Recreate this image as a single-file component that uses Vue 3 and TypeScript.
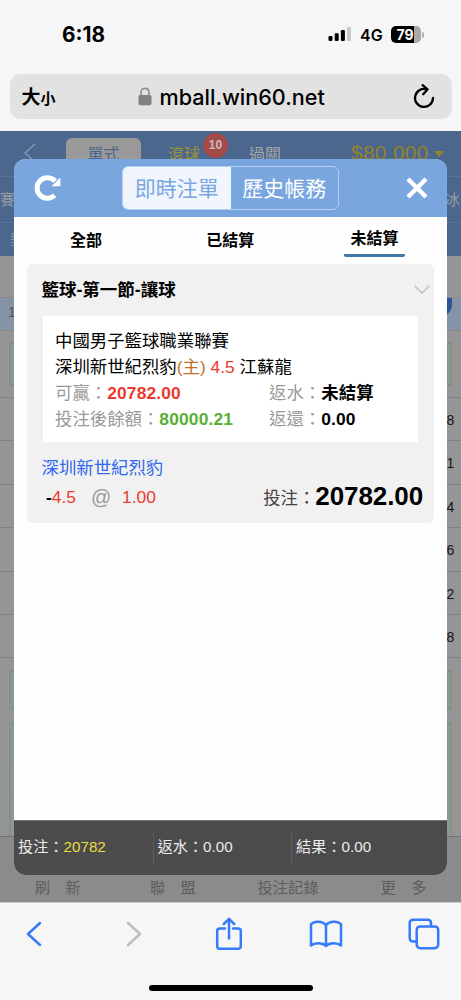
<script setup lang="ts">
const rows: string[] = ['8', '1', '4', '6', '2', '8']
const bottomNav: string[] = ['刷　新', '聯　盟', '投注記錄', '更　多']
const totals = [
  { label: '投注：', value: '20782', hot: true },
  { label: '返水：', value: '0.00', hot: false },
  { label: '結果：', value: '0.00', hot: false },
]
const tabs: string[] = ['全部', '已結算', '未結算']
</script>

<template>
  <div class="phone">
    <header class="status">
      <span class="clock">6:18</span>
      <div class="signals">
        <svg class="bars" width="24" height="16" viewBox="0 0 24 16">
          <rect x="0.5" y="10" width="4" height="5" rx="1.2" />
          <rect x="6.7" y="7.2" width="4" height="7.8" rx="1.2" />
          <rect x="12.9" y="4" width="4" height="11" rx="1.2" />
          <rect x="19" y="0.8" width="4" height="14.2" rx="1.2" fill="#c9c9c9" />
        </svg>
        <span class="net">4G</span>
        <span class="battery">79</span>
        <i class="cap"></i>
      </div>
    </header>

    <div class="address">
      <span class="aa"><b>大</b><small>小</small></span>
      <div class="host">
        <svg width="14" height="19" viewBox="0 0 14 19">
          <rect x="0.5" y="8" width="13" height="10.2" rx="1.8" fill="#808082" />
          <path d="M3 8.5V5.4C3 -0.1 11 -0.1 11 5.4V8.5" fill="none" stroke="#909092" stroke-width="1.7" />
        </svg>
        <span>mball.win60.net</span>
      </div>
      <svg class="reload" width="22" height="26" viewBox="0 0 22 26">
        <path d="M13.6 5.3A9 9 0 1 0 20 14" />
        <path d="M9.6 1.2L14.5 5.4L10.2 10.2" />
      </svg>
    </div>

    <main class="site">
      <div class="page">
        <div class="nav">
          <svg class="back" width="12" height="20" viewBox="0 0 12 20"><path d="M11 1L1 10L11 19" /></svg>
          <span class="mode">單式</span>
          <span class="live">滾球<em>10</em></span>
          <span class="parlay">過關</span>
          <span class="money">$80,000<i></i></span>
        </div>
        <div class="cats"><span>賽</span><span>冰</span></div>
        <div class="subs">對</div>
        <div class="gap"></div>
        <div class="league"><span>1</span><i></i></div>
        <div class="block"><div class="box"></div></div>
        <div v-for="(n, i) in rows" :key="i" class="odds">{{ n }}</div>
        <div class="below">
          <div class="box short"></div>
          <div class="box tall"><i></i><i></i></div>
        </div>
        <nav class="bottom"><span v-for="b in bottomNav" :key="b">{{ b }}</span></nav>
      </div>

      <section class="modal">
        <div class="head">
          <svg class="refresh" width="28" height="28" viewBox="0 0 28 28">
            <path d="M20.6 21.3A10.3 10.3 0 1 1 21.2 7.2" fill="none" stroke="#fff" stroke-width="5" />
            <path d="M26.4 3.6V12.2H17.6Z" fill="#fff" />
          </svg>
          <div class="switch"><span class="on">即時注單</span><span>歷史帳務</span></div>
          <svg class="close" width="22" height="22" viewBox="0 0 22 22"><path d="M2 2L20 20M20 2L2 20" /></svg>
        </div>
        <div class="tabs">
          <span v-for="(t, i) in tabs" :key="t" :class="{ active: i === 2 }">{{ t }}</span>
        </div>
        <article class="card">
          <div class="title">
            <span>籃球-第一節-讓球</span>
            <svg width="16" height="10" viewBox="0 0 16 10"><path d="M1 1.2L8 8L15 1.2" /></svg>
          </div>
          <div class="detail">
            <p>中國男子籃球職業聯賽</p>
            <p>深圳新世紀烈豹<span class="home">(主)</span> <span class="red">4.5</span> 江蘇龍</p>
            <div class="pair">
              <p>可贏：<b class="red">20782.00</b></p>
              <p>返水：<b>未結算</b></p>
              <p>投注後餘額：<b class="green">80000.21</b></p>
              <p>返還：<b>0.00</b></p>
            </div>
          </div>
          <div class="team">深圳新世紀烈豹</div>
          <div class="stake">
            <span class="minus">-</span><span class="red">4.5</span>
            <span class="at">@</span><span class="red">1.00</span>
            <span class="amount">投注：<b>20782.00</b></span>
          </div>
        </article>
        <footer class="totals">
          <div v-for="t in totals" :key="t.label">{{ t.label }}<span :class="{ hot: t.hot }">{{ t.value }}</span></div>
        </footer>
      </section>
    </main>

    <footer class="safari">
      <div class="tools">
        <svg width="16" height="26" viewBox="0 0 16 26"><path d="M14 2L2 13L14 24" /></svg>
        <svg class="off" width="16" height="26" viewBox="0 0 16 26"><path d="M2 2L14 13L2 24" /></svg>
        <svg width="28" height="34" viewBox="0 0 28 34">
          <path d="M10 11.5H4.8Q2.2 11.5 2.2 14V29Q2.2 31.8 4.8 31.8H23.2Q25.8 31.8 25.8 29V14Q25.8 11.5 23.2 11.5H18" />
          <path d="M14 21.5V2.2M8.8 7L14 1.8L19.2 7" />
        </svg>
        <svg width="34" height="28" viewBox="0 0 34 28">
          <path d="M17 5.2C13.5 0.8 5.5 0.6 2 4.2V25.5C5.5 22.5 13.5 22.4 17 26C20.5 22.4 28.5 22.5 32 25.5V4.2C28.5 0.6 20.5 0.8 17 5.2ZM17 5.2V26" />
        </svg>
        <svg width="32" height="32" viewBox="0 0 32 32">
          <path d="M8.6 23.5H5Q1.7 23.5 1.7 20V5Q1.7 1.7 5 1.7H19.7Q23 1.7 23 5V8" />
          <rect x="8.7" y="8.5" width="21.5" height="21.7" rx="3.4" />
        </svg>
      </div>
      <div class="grip"></div>
    </footer>
  </div>
</template>

<style>
body { margin: 0; }
</style>

<style scoped>
* { box-sizing: border-box; }
p { margin: 0; }
svg { display: block; flex: none; }
.phone {
  width: 461px; height: 1000px; overflow: hidden; display: flex; flex-direction: column;
  background: #f6f6f6; color: #000; white-space: nowrap;
  font-family: "Liberation Sans", "Noto Sans CJK TC", sans-serif;
}
.status { height: 74px; flex: none; display: flex; justify-content: space-between; padding: 23px 37px 0 62px; font-family: Inter, sans-serif; }
.clock { font-size: 20.8px; line-height: 24px; font-weight: 700; }
.signals { display: flex; height: 23px; align-items: center; }
.bars { margin-top: -1px; }
.net { margin-left: 8px; width: 31px; font-size: 16px; font-weight: 600; }
.battery { width: 30px; height: 17px; border-radius: 5px; background: linear-gradient(90deg, #000 23px, #a9a9a9 23px); color: #fff; font-size: 14px; line-height: 17px; font-weight: 700; padding-left: 5.5px; }
.cap { width: 2px; height: 6px; margin-left: 1px; background: #b0b0b0; border-radius: 0 2px 2px 0; }
.address { flex: none; height: 45px; margin: 0 9.5px 12px; padding: 0 17px 0 12px; border-radius: 11px; background: #e2e2e2; display: flex; align-items: center; }
.aa { font-family: "Noto Sans CJK TC", sans-serif; display: flex; align-items: baseline; width: 116.5px; line-height: 45px; }
.aa b { font-size: 19px; }
.aa small { font-size: 15px; font-weight: 700; }
.host { display: flex; align-items: center; gap: 7.5px; font-family: Inter, sans-serif; font-size: 21.6px; font-weight: 500; }
.host svg { margin-top: -1px; }
.reload { margin: 0 0 0 auto; fill: none; stroke: #000; stroke-width: 2.3; stroke-linecap: round; stroke-linejoin: round; }

.site { flex: none; height: 771px; position: relative; overflow: hidden; }
.page { height: 771px; background: #959595; display: flex; flex-direction: column; }
.nav { height: 46px; flex: none; display: flex; background: #4c678d; border-bottom: 1px solid #58749a; font-size: 16px; line-height: 47px; color: #a6a6a6; }
.back { margin: 12px 30px 0 24px; fill: none; stroke: #8d9db5; stroke-width: 1.2; }
.mode { margin-top: 7px; width: 75px; height: 39px; line-height: 33px; text-align: center; border-radius: 6px; background: #999; color: #4c678d; }
.live { margin-left: 27px; width: 81px; color: #9e9238; position: relative; }
.live em { position: absolute; left: 35px; top: 2px; width: 25px; height: 25px; border-radius: 50%; background: #a44a49; color: #cbb; font: bold 12px/25px "Liberation Sans", sans-serif; text-align: center; }
.parlay { width: 102px; }
.money { font-size: 20.8px; line-height: 44px; color: #93832d; letter-spacing: .35px; display: flex; align-items: center; height: 43px; }
.money i { border: 5px solid transparent; border-top: 6px solid #93832d; border-bottom: 0; margin: 2px 0 0 5px; }
.cats { height: 46px; flex: none; background: #4c678d; border-bottom: 1px solid #58749a; display: flex; justify-content: space-between; padding-right: 1px; font-size: 15px; line-height: 46px; color: #929baa; }
.subs { height: 33px; flex: none; background: #4c678d; color: #7f90aa; font-size: 15px; line-height: 33px; padding-left: 10px; }
.gap { height: 41px; flex: none; }
.league { height: 34px; flex: none; background: #8493a6; border-bottom: 1px solid #888; border-top: 1px solid #888; display: flex; justify-content: space-between; padding: 0 9px 0 8px; font-size: 14px; line-height: 28px; color: #4e545c; }
.league i { width: 22px; height: 18px; background: #2d5495; border-radius: 0 0 14px 14px; }
.block { height: 67px; flex: none; padding: 11px 9px; border-bottom: 1px solid #828282; }
.box { height: 44px; flex: none; border: 2px solid #809389; background: #8b9592; }
.odds { height: 43.4px; flex: none; border-bottom: 1px solid #828282; text-align: right; padding-right: 6.8px; font-size: 14px; line-height: 44px; color: #151515; }
.below { flex: 1; min-height: 0; padding: 12px 9px 0; display: flex; flex-direction: column; gap: 12px; overflow: hidden; }
.short { height: 40px; }
.tall { height: 130px; background: #919594; }
.tall i { display: block; height: 38px; border-bottom: 1px solid #809389; }
.tall i:first-child { background: #8b9592; }
.bottom { height: 66px; flex: none; border-top: 1px solid #707070; background: #8b8b8b; display: grid; grid-template-columns: repeat(4, 25%); text-align: center; font-size: 15.3px; line-height: 102px; color: #5d5d5d; overflow: hidden; }

.modal { position: absolute; left: 14px; top: 27.5px; width: 432.5px; height: 716.5px; border-radius: 12px; background: #fefefe; overflow: hidden; display: flex; flex-direction: column; }
.head { height: 58.5px; flex: none; background: #79a6df; display: flex; align-items: center; padding: 0 19px 0 20px; }
.switch { width: 217px; height: 43.5px; margin: 0 auto 0 60px; border: 1.3px solid #b8d0ee; border-radius: 6px; display: grid; grid-template-columns: 1fr 1fr; overflow: hidden; font-size: 21px; line-height: 44px; text-align: center; color: #fff; }
.on { background: #f1f5fd; color: #79a6df; }
.refresh { margin-top: 1px; }
.close { fill: none; stroke: #fff; stroke-width: 4.4; margin-top: 1px; }
.tabs { height: 47px; flex: none; display: grid; grid-template-columns: repeat(3, 1fr); font-size: 16px; font-weight: 700; line-height: 47px; justify-items: center; }
.active { line-height: 43px; height: 39.5px; width: 61px; text-align: center; border-bottom: 3px solid #4277a9; border-radius: 2px; }
.card { flex: none; margin: 0 12.5px 0 13px; height: 259px; border-radius: 6px; background: #f1f1f1; font-size: 17.4px; }
.title { height: 51.5px; display: flex; align-items: center; justify-content: space-between; padding: 0 4px 3px 14.5px; font-weight: 700; font-size: 17.5px; }
.title svg { fill: none; stroke: #c9c9c9; stroke-width: 1.8; stroke-linecap: round; margin-top: 4px; }
.detail { height: 126.5px; margin: 0 16.5px 0 16px; padding: 12px 12px 0; background: #fff; line-height: 26px; }
.detail p { height: 26px; }
.pair { display: grid; grid-template-columns: 214px 1fr; color: #999; }
.pair b { color: #000; letter-spacing: .15px; }
.home { color: #bd7429; }
.red, .pair .red { color: #ed392d; }
.pair .green { color: #58af35; }
.team { margin: 12px 0 0 14.5px; height: 26px; line-height: 28px; color: #3068ee; }
.stake { display: flex; align-items: center; height: 34px; padding: 0 11px 0 19px; font-size: 17.4px; }
.minus { font-weight: 700; }
.at { color: #999; width: 46px; padding-left: 15px; font-size: 20px; }
.amount { margin-left: auto; color: #444; display: flex; align-items: center; height: 30px; margin-top: -2px; }
.amount b { font-size: 26px; color: #000; letter-spacing: -.1px; }
.totals { margin-top: auto; height: 55.5px; background: #4b4b4b; display: grid; grid-template-columns: 138.5px 138.5px 1fr; align-items: center; font-size: 15.2px; color: #ececec; border-top: 1px solid #757575; }
.totals div { height: 34px; line-height: 32px; padding-left: 4px; }
.totals div + div { border-left: 1px solid #5d5d5d; }
.hot { color: #eedb40; }

.safari { height: 98px; flex: none; background: #f6f6f6; display: flex; flex-direction: column; align-items: center; border-top: 1px solid #c8c8c8; }
.tools { width: 487.5px; height: 61px; align-self: flex-start; margin-left: -15px; display: grid; grid-template-columns: repeat(5, 1fr); align-items: center; justify-items: center; fill: none; stroke: #367bf7; stroke-width: 2.5; stroke-linecap: round; stroke-linejoin: round; }
.tools .off { stroke: #bdbdbd; margin-left: 6px; }
.grip { margin-top: 20.5px; width: 164px; height: 6px; border-radius: 3px; background: #000; }
</style>
